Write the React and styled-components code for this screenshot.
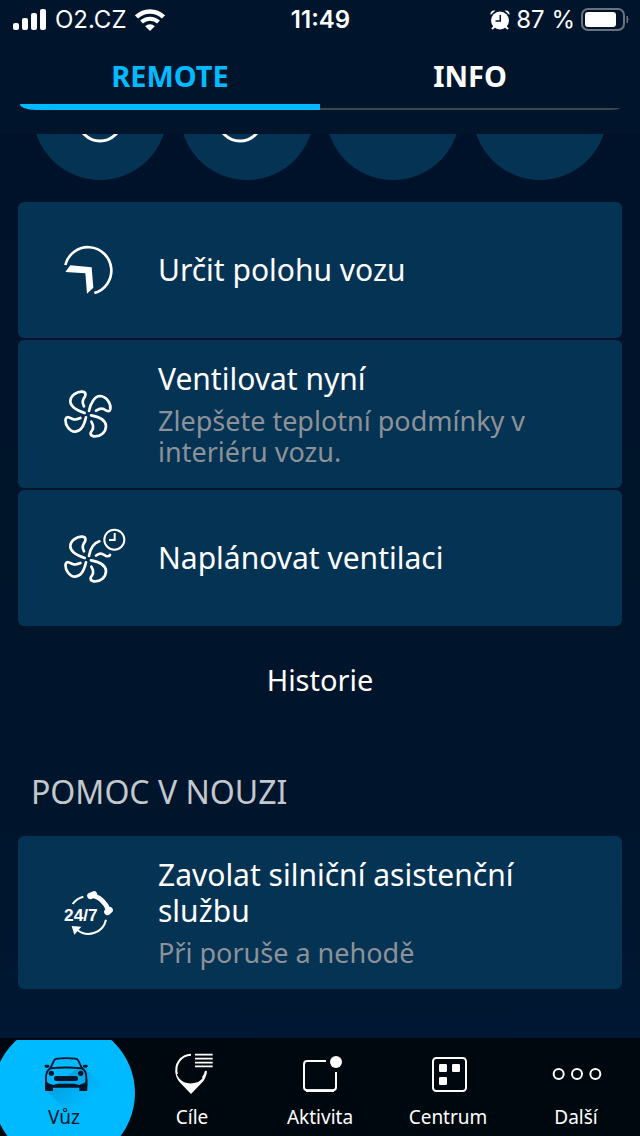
import styled, { createGlobalStyle } from 'styled-components'

const colors = {
  background: '#00152b',
  deep: '#001229',
  card: '#053354',
  accent: '#00baff',
  muted: '#8c9297',
  nav: '#00080f',
}

// ICONS
const SignalIcon = () => (
  <svg width="34" height="22" viewBox="0 0 34 22" fill="#fff" aria-hidden="true">
    <rect x="1" y="14" width="6" height="7" rx="2" />
    <rect x="10" y="9" width="6" height="12" rx="2" />
    <rect x="19" y="4" width="6" height="17" rx="2" />
    <rect x="28" y="0" width="6" height="21" rx="2" />
  </svg>
)

const WifiIcon = () => (
  <svg width="30" height="22" viewBox="0 0 30 22" fill="none" stroke="#fff" aria-hidden="true">
    <path d="M1.5 8A19.5 19.5 0 0 1 28.5 8" strokeWidth="4.5" />
    <path d="M6.5 13A12.4 12.4 0 0 1 23.5 13" strokeWidth="4" />
    <path d="M15 22l-4.8-4.8a7 7 0 0 1 9.6 0z" fill="#fff" stroke="none" />
  </svg>
)

const AlarmIcon = () => (
  <svg width="20" height="20" viewBox="0 0 20 20" aria-hidden="true">
    <circle cx="10" cy="10.5" r="9" fill="#fff" />
    <path d="M0.5 5Q0 0 5.500 0.5ZM19.5 5Q20 0 14.5 0.5Z" fill="#fff" />
    <path d="M4.500 16.500l-2.500 2.500M15.500 16.500l2.500 2.500" stroke="#fff" strokeWidth="2" />
    <path d="M10.3 5v6H5.500" fill="none" stroke={colors.background} strokeWidth="1.5" />
  </svg>
)

const BatteryIcon = () => (
  <svg width="48" height="24" viewBox="0 0 48 24" aria-hidden="true">
    <rect x="1" y="1" width="42" height="21" rx="6" fill="none" stroke="#68737f" strokeWidth="2" />
    <rect x="4" y="4" width="31" height="15" rx="3" fill="#fff" />
    <path d="M46 8q2 3.5 0 7z" fill="#68737f" stroke="#68737f" />
  </svg>
)

const LocateIcon = () => (
  <svg width="64" height="64" viewBox="72 24 192 192" aria-hidden="true">
    <path d="M76 105A70 70 0 1 1 163 189" fill="none" stroke="#fff" strokeWidth="8" />
    <path d="M76 126L91 106L155 112L160 173L141 191L136 130Z" fill="#fff" />
  </svg>
)

const fanBlades = (
  <>
    <path d="M134 129C112 122 91 110 91 94C91 76 112 64 127 65C141 67 137 78 131 86C125 95 128 101 132 109" />
    <path d="M138 142C133 165 124 184 106 185C89 186 74 163 77 147C80 137 90 143 98 147C107 151 114 147 121 144" />
    <path d="M153 136C177 140 197 149 198 168C198 186 182 201 161 199C147 196 152 186 157 180C163 170 158 162 154 155" />
  </>
)

const FanIcon = () => (
  <svg width="64" height="64" viewBox="72 36 192 192" fill="none" stroke="#fff" strokeWidth="8" strokeLinecap="round" aria-hidden="true">
    {fanBlades}
    <path d="M147 123C151 101 164 78 180 78C200 79 214 102 211 118C208 127 199 123 191 117C181 113 174 118 168 122" />
  </svg>
)

const FanTimerIcon = () => (
  <svg width="64" height="64" viewBox="72 33 192 192" fill="none" stroke="#fff" strokeWidth="8" strokeLinecap="round" aria-hidden="true">
    {fanBlades}
    <path d="M147 123C151 101 161 84 178 79" />
    <path d="M168 122C176 114 186 115 193 120C199 125 207 125 210 120" />
    <circle cx="223" cy="74" r="30" strokeWidth="6" />
    <path d="M224 54V75H207" strokeWidth="6" strokeLinecap="butt" />
  </svg>
)

const AssistanceIcon = () => (
  <svg width="64" height="64" viewBox="72 30 192 192" aria-hidden="true">
    <g fill="none" stroke="#fff">
      <path d="M98 99A58 58 0 0 1 130 77M198 146A54 54 0 0 1 112 177" strokeWidth="6" />
      <path d="M158 73Q192 84 205 117" strokeWidth="14" />
      <path d="M151 75L162 70M202 123L209 117" strokeWidth="19" strokeLinecap="round" strokeLinejoin="round" />
    </g>
    <path d="M95 165L124 167L103 191Z" fill="#fff" />
    <text x="72" y="150" fill="#fff" fontFamily="Liberation Sans, sans-serif" fontWeight="700" fontSize="52">24/7</text>
  </svg>
)

const CarIcon = () => (
  <CarDrawing width="64" height="48" viewBox="96 60 192 144" aria-hidden="true">
    <defs>
      <linearGradient id="shade" gradientUnits="userSpaceOnUse" x1="200" y1="130" x2="270" y2="210">
        <stop offset="0" stopColor="#0090cc" stopOpacity="0.6" />
        <stop offset="1" stopColor="#0090cc" stopOpacity="0" />
      </linearGradient>
    </defs>
    <path d="M246 104L330 188L270 260H216L140 183Z" fill="url(#shade)" />
    <g fill="none" stroke="#04152a" strokeWidth="5.500">
      <path d="M151 115L162 92Q164 87 172 86Q198 83 225 86Q233 87 235 92L246 115" />
      <path d="M151 115Q198 110 246 115" />
      <path d="M151 115Q139 121 138 140V168M246 115Q258 121 259 140V168" />
    </g>
    <g fill="#04152a">
      <rect x="134" y="104" width="14" height="9" rx="4" />
      <rect x="249" y="104" width="14" height="9" rx="4" />
      <circle cx="154" cy="130" r="8" />
      <circle cx="242" cy="130" r="8" />
      <rect x="162" y="138" width="72" height="15" rx="7" />
      <path d="M135 148Q142 162 159 164V183H138Q135 183 135 179ZM262 148Q255 162 238 164V183H259Q262 183 262 179Z" />
      <path d="M156 166Q170 161 174 161H222Q226 161 241 166V173H156Z" />
    </g>
  </CarDrawing>
)

const PlacesIcon = () => (
  <svg width="64" height="48" viewBox="480 60 192 144" aria-hidden="true">
    <path d="M573 74A45 45 0 0 0 531 132M618 123Q616 136 608 144" fill="none" stroke="#fff" strokeWidth="6" />
    <path d="M528 124Q532 146 552 157Q573 164 594 156Q612 147 617 124L620 125Q619 145 604 160L573 192L542 160Q527 145 526 124Z" fill="#fff" />
    <path d="M585 74H638M585 86H638M585 98H638M585 109H638" stroke="#fff" strokeWidth="5" />
  </svg>
)

const ActivityIcon = () => (
  <svg width="64" height="48" viewBox="144 60 192 144" aria-hidden="true">
    <path d="M258 93H202Q192 93 192 103V171Q192 181 202 181H278Q288 181 288 171V126" fill="none" stroke="#fff" strokeWidth="6" />
    <path d="M198 182H282" stroke="#fff" strokeWidth="8" />
    <circle cx="288" cy="96" r="18" fill="#fff" />
  </svg>
)

const CenterIcon = () => (
  <svg width="64" height="48" viewBox="528 60 192 144" fill="#fff" aria-hidden="true">
    <rect x="579" y="84" width="99" height="99" rx="10" fill="none" stroke="#fff" strokeWidth="6" />
    <rect x="597" y="102" width="24" height="24" rx="4" />
    <rect x="636" y="102" width="24" height="24" rx="4" />
    <rect x="597" y="141" width="24" height="24" rx="4" />
  </svg>
)

const MoreIcon = () => (
  <svg width="64" height="48" viewBox="912 60 192 144" fill="none" stroke="#fff" strokeWidth="6" aria-hidden="true">
    <circle cx="956" cy="132" r="15" />
    <circle cx="1011" cy="132" r="15" />
    <circle cx="1066" cy="132" r="15" />
  </svg>
)

// DATA
const shortcuts = [{ arc: 67 }, { arc: 60 }, {}, {}]

const remoteActions = [
  { title: 'Určit polohu vozu', Icon: LocateIcon },
  {
    title: 'Ventilovat nyní',
    text: 'Zlepšete teplotní podmínky v interiéru vozu.',
    Icon: FanIcon,
  },
  { title: 'Naplánovat ventilaci', Icon: FanTimerIcon },
]

const helpActions = [
  {
    title: 'Zavolat silniční asistenční službu',
    text: 'Při poruše a nehodě',
    Icon: AssistanceIcon,
  },
]

const navItems = [
  { label: 'Vůz', Icon: CarIcon, active: true },
  { label: 'Cíle', Icon: PlacesIcon },
  { label: 'Aktivita', Icon: ActivityIcon },
  { label: 'Centrum', Icon: CenterIcon },
  { label: 'Další', Icon: MoreIcon },
]

function ActionList({ items }) {
  return (
    <Actions>
      {items.map(({ title, text, Icon }) => (
        <Action key={title} type="button">
          <Icon />
          <ActionBody>
            <ActionTitle>{title}</ActionTitle>
            {text && <ActionText>{text}</ActionText>}
          </ActionBody>
        </Action>
      ))}
    </Actions>
  )
}

function App() {
  return (
    <>
      <GlobalStyle />
      <Page>
        <StatusBar>
          <StatusGroup>
            <SignalIcon />
            <span>O2.CZ</span>
            <WifiIcon />
          </StatusGroup>
          <Clock>11:49</Clock>
          <StatusGroup $end>
            <AlarmIcon />
            <span>87 %</span>
            <BatteryIcon />
          </StatusGroup>
        </StatusBar>
        <Tabs role="tablist">
          <Tab type="button" role="tab" aria-selected="true" $active>
            REMOTE
          </Tab>
          <Tab type="button" role="tab" aria-selected="false">
            INFO
          </Tab>
        </Tabs>
        <Content>
          <Shortcuts>
            {shortcuts.map(({ arc }, i) => (
              <Shortcut key={i} type="button" aria-label={`Zkratka ${i + 1}`}>
                <svg width="134" height="134" viewBox="0 0 134 134" aria-hidden="true">
                  {arc && <circle cx={arc} cy="73" r="22" fill="none" stroke="#fff" strokeWidth="3" />}
                </svg>
              </Shortcut>
            ))}
          </Shortcuts>
          <ActionList items={remoteActions} />
          <History type="button">Historie</History>
          <Heading>POMOC V NOUZI</Heading>
          <ActionList items={helpActions} />
        </Content>
        <Nav>
          {navItems.map(({ label, Icon, active }) => (
            <NavLink key={label} href="#" $active={active}>
              <Icon />
              <span>{label}</span>
            </NavLink>
          ))}
        </Nav>
      </Page>
    </>
  )
}

const GlobalStyle = createGlobalStyle`
  * {
    box-sizing: border-box;
  }

  body {
    margin: 0;
    background: ${colors.background};
    color: #fff;
    font-family: 'Noto Sans', sans-serif;
  }

  button {
    margin: 0;
    padding: 0;
    border: 0;
    background: none;
    color: inherit;
    font: inherit;
    cursor: pointer;
  }

  svg {
    display: block;
    flex-shrink: 0;
  }
`

const CarDrawing = styled.svg`
  overflow: visible;
`

const Page = styled.div`
  min-height: 100vh;
  display: flex;
  flex-direction: column;
`

const StatusBar = styled.div`
  display: grid;
  grid-template-columns: 1fr auto 1fr;
  align-items: center;
  padding: 4px 11px 4px 12px;
  font-family: Inter, sans-serif;
  font-size: 24px;
  line-height: 32px;
`

const StatusGroup = styled.div`
  display: flex;
  align-items: center;
  justify-content: ${({ $end }) => ($end ? 'flex-end' : 'flex-start')};
  gap: ${({ $end }) => ($end ? '6px' : '9px')};
`

const Clock = styled.span`
  font-weight: 600;
`

const Tabs = styled.div`
  display: grid;
  grid-template-columns: 1fr 1fr;
  padding: 16px 20px 24px;
`

const Tab = styled.button`
  display: flex;
  flex-direction: column;
  align-items: center;
  justify-content: space-between;
  height: 54px;
  font-size: 29px;
  font-weight: 700;
  line-height: 40px;
  color: ${({ $active }) => ($active ? colors.accent : '#fff')};

  &::after {
    content: '';
    width: 100%;
    height: ${({ $active }) => ($active ? '6px' : '2px')};
    border-radius: ${({ $active }) =>
      $active ? '0 0 0 16px / 0 0 0 6px' : '0 0 12px 0 / 0 0 2px 0'};
    background: ${({ $active }) => ($active ? colors.accent : '#3c4849')};
  }
`

const Content = styled.main`
  flex: 1;
  padding: 0 18px 48px;
  background: linear-gradient(${colors.deep}, ${colors.background} 70%, #001733);
`

const Shortcuts = styled.div`
  display: flex;
  justify-content: space-between;
  align-items: flex-end;
  height: 46px;
  margin-bottom: 22px;
  padding: 0 15px;
  overflow: hidden;
`

const Shortcut = styled.button`
  border-radius: 50%;
  background: ${colors.card};
`

const Actions = styled.div`
  display: flex;
  flex-direction: column;
  gap: 2px;
`

const Action = styled.button`
  display: flex;
  align-items: center;
  gap: 30px;
  min-height: 136px;
  padding: 21px 46px;
  border-radius: 6px;
  background: ${colors.card};
  text-align: left;
`

const ActionBody = styled.span`
  display: flex;
  flex-direction: column;
  gap: 8px;
`

const ActionTitle = styled.span`
  font-size: 30px;
  line-height: 36px;
`

const ActionText = styled.span`
  font-size: 27px;
  line-height: 31px;
  color: ${colors.muted};
`

const History = styled.button`
  display: block;
  width: 100%;
  padding: 36px 0;
  font-size: 29px;
  line-height: 36px;
`

const Heading = styled.h2`
  margin: 0;
  padding: 40px 13px 26px;
  font-size: 32px;
  font-weight: 400;
  line-height: 36px;
  color: #c3c8cd;
`

const Nav = styled.nav`
  position: sticky;
  bottom: 0;
  display: grid;
  grid-template-columns: repeat(5, 1fr);
  border-top: 2px solid ${colors.nav};
  background: ${colors.nav};
  overflow: hidden;
`

const NavLink = styled.a`
  position: relative;
  display: flex;
  flex-direction: column;
  align-items: center;
  gap: 5px;
  padding: 10px 0 5px;
  font-size: 19px;
  line-height: 28px;
  color: ${({ $active }) => ($active ? '#04152a' : '#fff')};
  text-decoration: none;

  & > * {
    position: relative;
  }

  &::before {
    content: '';
    display: ${({ $active }) => ($active ? 'block' : 'none')};
    position: absolute;
    top: -18px;
    left: calc(50% - 71px);
    width: 142px;
    height: 142px;
    border-radius: 50%;
    background: ${colors.accent};
  }
`

export default App
